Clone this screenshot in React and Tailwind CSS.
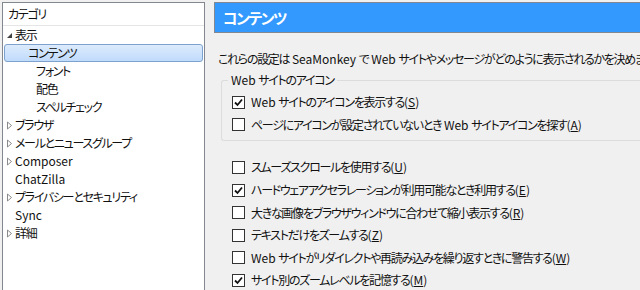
import React from "react";

const font = { fontFamily: '"Noto Sans CJK JP", "Noto Sans", sans-serif' };

function J({ t }) {
  const parts = t.split(/([\u3000-\u9fff\uff00-\uffef]+)/);
  return (
    <>
      {parts.map((p, i) =>
        /[\u3000-\u9fff\uff00-\uffef]/.test(p) ? (
          <span key={i} className="tracking-[-1.3px]">
            {p}
          </span>
        ) : (
          <span key={i}>{p}</span>
        )
      )}
    </>
  );
}

function Arrow({ open }) {
  if (open) {
    return (
      <svg width="7" height="7" viewBox="0 0 7 7" className="shrink-0">
        <path d="M6 1 L6 6 L1 6 Z" fill="#404040" />
      </svg>
    );
  }
  return (
    <svg width="7" height="9" viewBox="0 0 7 9" className="shrink-0">
      <path d="M1.5 1 L5.5 4.5 L1.5 8 Z" fill="none" stroke="#8a8a8a" strokeWidth="1" />
    </svg>
  );
}

function TreeRow({ label, level = 0, arrow, selected }) {
  return (
    <div className="h-[18px] flex items-center">
      {selected ? (
        <div className="mx-[1px] flex-1 h-[18px] flex items-center pl-[23px] border border-[#7da2ce] rounded-[3px] bg-gradient-to-b from-[#dcebfc] to-[#c1dbfc]">
          <span><J t={label} /></span>
        </div>
      ) : (
        <div className={`flex items-center ${level === 1 ? "pl-[24px]" : "pl-[3px]"}`}>
          <span className="w-[9px] flex items-center">{arrow ? <Arrow open={arrow === "open"} /> : null}</span>
          <span><J t={label} /></span>
        </div>
      )}
    </div>
  );
}

function Check({ checked }) {
  return (
    <div className="w-[13px] h-[13px] border border-[#333333] bg-white flex items-center justify-center shrink-0">
      {checked ? (
        <svg width="9" height="9" viewBox="0 0 9 9">
          <path d="M1 4.5 L3.5 7 L8 1.5" fill="none" stroke="#111" strokeWidth="1.8" />
        </svg>
      ) : null}
    </div>
  );
}

function CheckRow({ checked, text, k }) {
  return (
    <div className="h-[22.6px] flex items-center gap-[6px]">
      <Check checked={checked} />
      <span className="whitespace-nowrap">
        <J t={text} />(<span className="underline">{k}</span>)
      </span>
    </div>
  );
}

export default function App() {
  return (
    <div
      className="w-[640px] h-[290px] bg-[#f0f0f0] overflow-hidden flex text-[12px] text-[#111111] leading-none"
      style={{ ...font, fontFeatureSettings: '"palt"' }}
    >
      <div className="ml-[2px] mt-[2px] w-[203px] h-[300px] bg-white border border-[#828790] shrink-0">
        <div className="h-[23px] flex items-center pl-[5px] border-b border-[#e5e5e5]">
          <J t="カテゴリ" />
        </div>
        <TreeRow label="表示" arrow="open" />
        <TreeRow label="コンテンツ" level={1} selected />
        <TreeRow label="フォント" level={1} />
        <TreeRow label="配色" level={1} />
        <TreeRow label="スペルチェック" level={1} />
        <TreeRow label="ブラウザ" arrow="closed" />
        <TreeRow label="メールとニュースグループ" arrow="closed" />
        <TreeRow label="Composer" arrow="closed" />
        <TreeRow label="ChatZilla" />
        <TreeRow label="プライバシーとセキュリティ" arrow="closed" />
        <TreeRow label="Sync" />
        <TreeRow label="詳細" arrow="closed" />
      </div>
      <div className="ml-[9px] flex-1 flex flex-col min-w-0">
        <div className="mt-[2px] h-[31px] bg-[#3399ff] border border-[#828790] border-r-0 flex items-center pl-[8px] text-white text-[15px] font-bold shrink-0">
          <span className="tracking-[-1.5px]">コンテンツ</span>
        </div>
        <div className="mt-[20px] pl-[4px] whitespace-nowrap">
          <J t="これらの設定は SeaMonkey で Web サイトやメッセージがどのように表示されるかを決めます。" />
        </div>
        <div className="mt-[15px] ml-[7px] relative border border-[#dcdcdc] border-r-0 rounded-l-[3px] pt-[10px] pb-[4px] pl-[10px] shrink-0">
          <div className="absolute -top-[7px] left-[6px] px-[3px] bg-[#f0f0f0]">
            <J t="Web サイトのアイコン" />
          </div>
          <CheckRow checked text="Web サイトのアイコンを表示する" k="S" />
          <CheckRow text="ページにアイコンが設定されていないとき Web サイトアイコンを探す" k="A" />
        </div>
        <div className="mt-[15px] pl-[18px] shrink-0">
          <CheckRow text="スムーズスクロールを使用する" k="U" />
          <CheckRow checked text="ハードウェアアクセラレーションが利用可能なとき利用する" k="E" />
          <CheckRow text="大きな画像をブラウザウィンドウに合わせて縮小表示する" k="R" />
          <CheckRow text="テキストだけをズームする" k="Z" />
          <CheckRow text="Web サイトがリダイレクトや再読み込みを繰り返すときに警告する" k="W" />
          <CheckRow checked text="サイト別のズームレベルを記憶する" k="M" />
        </div>
      </div>
    </div>
  );
}
